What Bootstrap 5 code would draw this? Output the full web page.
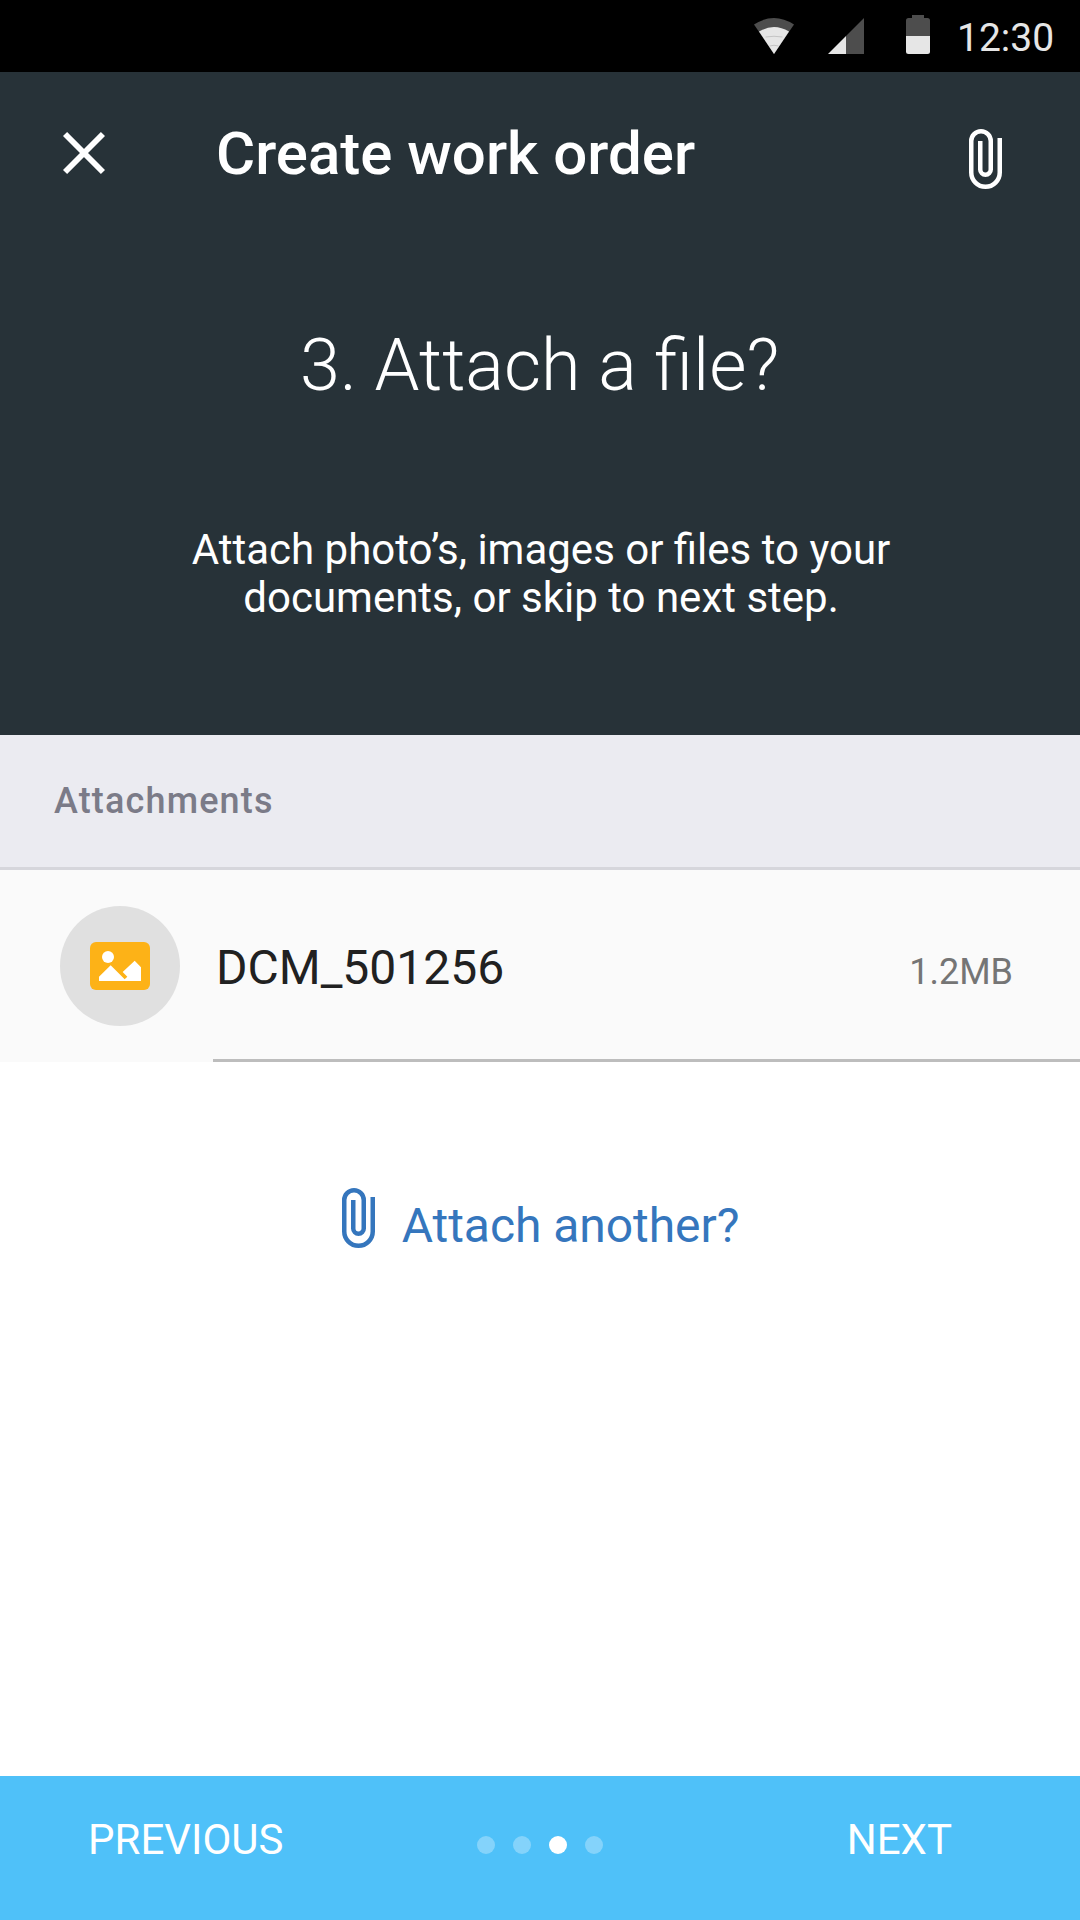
<!DOCTYPE html>
<html lang="en">
<head>
<meta charset="utf-8">
<meta name="viewport" content="width=device-width, initial-scale=1">
<title>Create work order</title>
<link rel="stylesheet" href="https://cdn.jsdelivr.net/npm/bootstrap@5.3.0/dist/css/bootstrap.min.css">
<style>
body{font-family:Roboto,"Noto Sans",sans-serif;width:1080px;height:1920px;overflow:hidden}
.status-bar{height:72px;background:#000;color:#e6e6e6;padding-right:26px}
.status-icons{margin-bottom:3px}
.clock{font-size:39px;line-height:48px;padding-top:4px;width:97px;margin-left:27px}
.hero{height:663px;background:#273238;color:#fff}
.title-bar{height:162px;padding:0 78px 0 63px}
.screen-title{font-size:60px;line-height:72px;font-weight:500;margin-left:111px;padding-top:2px}
.clip{width:33px;height:60px}
.title-bar .clip{margin-top:12px}
.step-title{font-size:72px;line-height:84px;font-weight:300;margin-top:90px;padding-right:1px}
.step-text{font-size:42px;line-height:48px;margin-top:118px;padding-left:2px}
.section-head{height:135px;background:#ebebf1;border-bottom:3px solid #d6d6dc;color:#7b7b88;font-size:36px;font-weight:500;letter-spacing:1.15px;padding-left:54px}
.file-row{height:192px;background:#fafafa;padding-left:60px}
.avatar{width:120px;height:120px;background:#e0e0e0}
.file-info{border-bottom:3px solid #bdbdbd;margin-left:33px;padding:62px 67px 0 3px}
.file-name{font-size:48px;line-height:72px;color:#212121}
.file-size{font-size:36px;line-height:54px;color:#757575}
.attach-link{color:#3576bd;font-size:48px;line-height:60px;letter-spacing:-.06px;padding:126px 0 0 1px}
.attach-label{padding-top:8px;margin-left:27px}
.footer-bar{height:144px;background:#4fc1f9;color:#fff;font-size:42px;line-height:48px;padding-bottom:17px}
.prev{margin-left:88px}
.next{margin-right:128px}
.dots{gap:18px;margin-top:11px}
.dot{width:18px;height:18px;background:rgba(255,255,255,.3)}
.dot.on{background:#fff}
</style>
</head>
<body class="d-flex flex-column bg-white">
<div class="status-bar d-flex align-items-center justify-content-end">
<svg class="status-icons" width="176" height="39" viewBox="0 0 176 39">
<path fill="#4d4d4d" d="M0 9.500Q20-3.500 40 9.500L20 39Z"/><path fill="#e6e6e6" d="M5 16.500Q20 7.500 35 16.500L20 39Z"/>
<path fill="none" stroke="#bbb" stroke-width=".8" d="M11.500 22Q20 20.500 28.500 22M15.500 31Q20 29.500 24.500 31"/>
<path fill="#4d4d4d" d="M92 39H110V3L92 21Z"/><path fill="#e6e6e6" d="M74 39L92 21V39Z"/>
<path fill="#4d4d4d" d="M152 21V5.500Q152 3 154.500 3H158V0H170V3H173.500Q176 3 176 5.500V21Z"/>
<path fill="#e6e6e6" d="M152 21H176V36.500Q176 39 173.500 39H154.500Q152 39 152 36.500Z"/>
</svg>
<span class="clock">12:30</span>
</div>
<header class="hero text-center">
<div class="title-bar d-flex align-items-center">
<svg width="42" height="42" viewBox="0 0 42 42" stroke="#fff" stroke-width="5.8"><path d="M2.050 2.050L39.950 39.950M39.950 2.050L2.050 39.950"/></svg>
<h1 class="screen-title mb-0">Create work order</h1>
<svg class="clip ms-auto" viewBox="0 0 11 20" fill="none" stroke="currentColor" stroke-width="1.5"><path d="M10.250 3V14.500A4.750 4.750 0 0 1 .75 14.500V4A3.250 3.250 0 0 1 7.250 4V13.500A1.750 1.750 0 0 1 3.750 13.500V4"/></svg>
</div>
<h2 class="step-title mb-0">3. Attach a file?</h2>
<p class="step-text mb-0">Attach photo’s, images or files to your<br>documents, or skip to next step.</p>
</header>
<div class="section-head d-flex align-items-center">Attachments</div>
<div class="file-row d-flex">
<div class="avatar rounded-circle d-flex align-items-center justify-content-center align-self-center">
<svg width="60" height="48" viewBox="0 0 180 144"><rect width="180" height="144" rx="18" fill="#fdb217"/><circle cx="54" cy="45" r="18" fill="#fff"/><path fill="#fff" d="M27 104L62 70L104 112L112 104L98 90L134 56L153 76V117H27Z"/></svg>
</div>
<div class="file-info d-flex flex-grow-1 align-items-baseline justify-content-between">
<span class="file-name">DCM_501256</span><span class="file-size">1.2MB</span>
</div>
</div>
<main class="flex-grow-1">
<a href="#" class="attach-link d-flex justify-content-center text-decoration-none">
<svg class="clip" viewBox="0 0 11 20" fill="none" stroke="currentColor" stroke-width="1.5"><path d="M10.250 3V14.500A4.750 4.750 0 0 1 .75 14.500V4A3.250 3.250 0 0 1 7.250 4V13.500A1.750 1.750 0 0 1 3.750 13.500V4"/></svg>
<span class="attach-label">Attach another?</span>
</a>
</main>
<footer class="footer-bar d-flex">
<div class="row g-0 align-items-center flex-grow-1">
<div class="col"><div class="prev">PREVIOUS</div></div>
<div class="col-auto dots d-flex"><span class="dot rounded-circle"></span><span class="dot rounded-circle"></span><span class="dot on rounded-circle"></span><span class="dot rounded-circle"></span></div>
<div class="col"><div class="next text-end">NEXT</div></div>
</div>
</footer>
<script src="https://cdn.jsdelivr.net/npm/bootstrap@5.3.0/dist/js/bootstrap.bundle.min.js"></script>
</body>
</html>
